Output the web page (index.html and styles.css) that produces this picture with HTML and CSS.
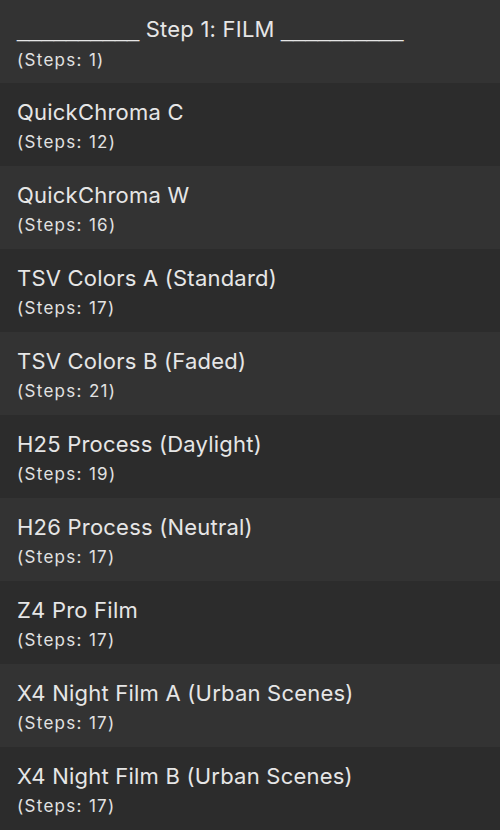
FILE: index.html
```html
<!DOCTYPE html>
<html>
<head>
<meta charset="utf-8">
<link rel="stylesheet" href="styles.css">
</head>
<body>
<div class="list">
  <div class="row odd"><div class="title"><span class="rule">__________</span> Step 1: FILM <span class="rule">__________</span></div><div class="sub">(Steps: 1)</div></div>
  <div class="row even"><div class="title">QuickChroma C</div><div class="sub">(Steps: 12)</div></div>
  <div class="row odd"><div class="title">QuickChroma W</div><div class="sub">(Steps: 16)</div></div>
  <div class="row even"><div class="title">TSV Colors A (Standard)</div><div class="sub">(Steps: 17)</div></div>
  <div class="row odd"><div class="title">TSV Colors B (Faded)</div><div class="sub">(Steps: 21)</div></div>
  <div class="row even"><div class="title">H25 Process (Daylight)</div><div class="sub">(Steps: 19)</div></div>
  <div class="row odd"><div class="title">H26 Process (Neutral)</div><div class="sub">(Steps: 17)</div></div>
  <div class="row even"><div class="title">Z4 Pro Film</div><div class="sub">(Steps: 17)</div></div>
  <div class="row odd"><div class="title">X4 Night Film A (Urban Scenes)</div><div class="sub">(Steps: 17)</div></div>
  <div class="row even"><div class="title">X4 Night Film B (Urban Scenes)</div><div class="sub">(Steps: 17)</div></div>
</div>
</body>
</html>
```
FILE: styles.css
```css
html, body {
  margin: 0;
  padding: 0;
  background: #2c2c2c;
}
body {
  width: 500px;
  height: 830px;
  overflow: hidden;
  font-family: "Inter", "Liberation Sans", sans-serif;
  color: #e6e6e6;
}
.list {
  display: flex;
  flex-direction: column;
}
.row {
  height: 83px;
  box-sizing: border-box;
  padding: 16px 17px 0;
}
.odd { background: #333333; }
.even { background: #2c2c2c; }
.title {
  font-size: 22px;
  line-height: 26px;
  letter-spacing: 0.22px;
  white-space: nowrap;
}
.rule {
  font-family: "Liberation Sans", sans-serif;
  letter-spacing: 0;
}
.sub {
  font-size: 17px;
  line-height: 20px;
  letter-spacing: 1.3px;
  margin-top: 7px;
  color: #e2e2e2;
}
```
